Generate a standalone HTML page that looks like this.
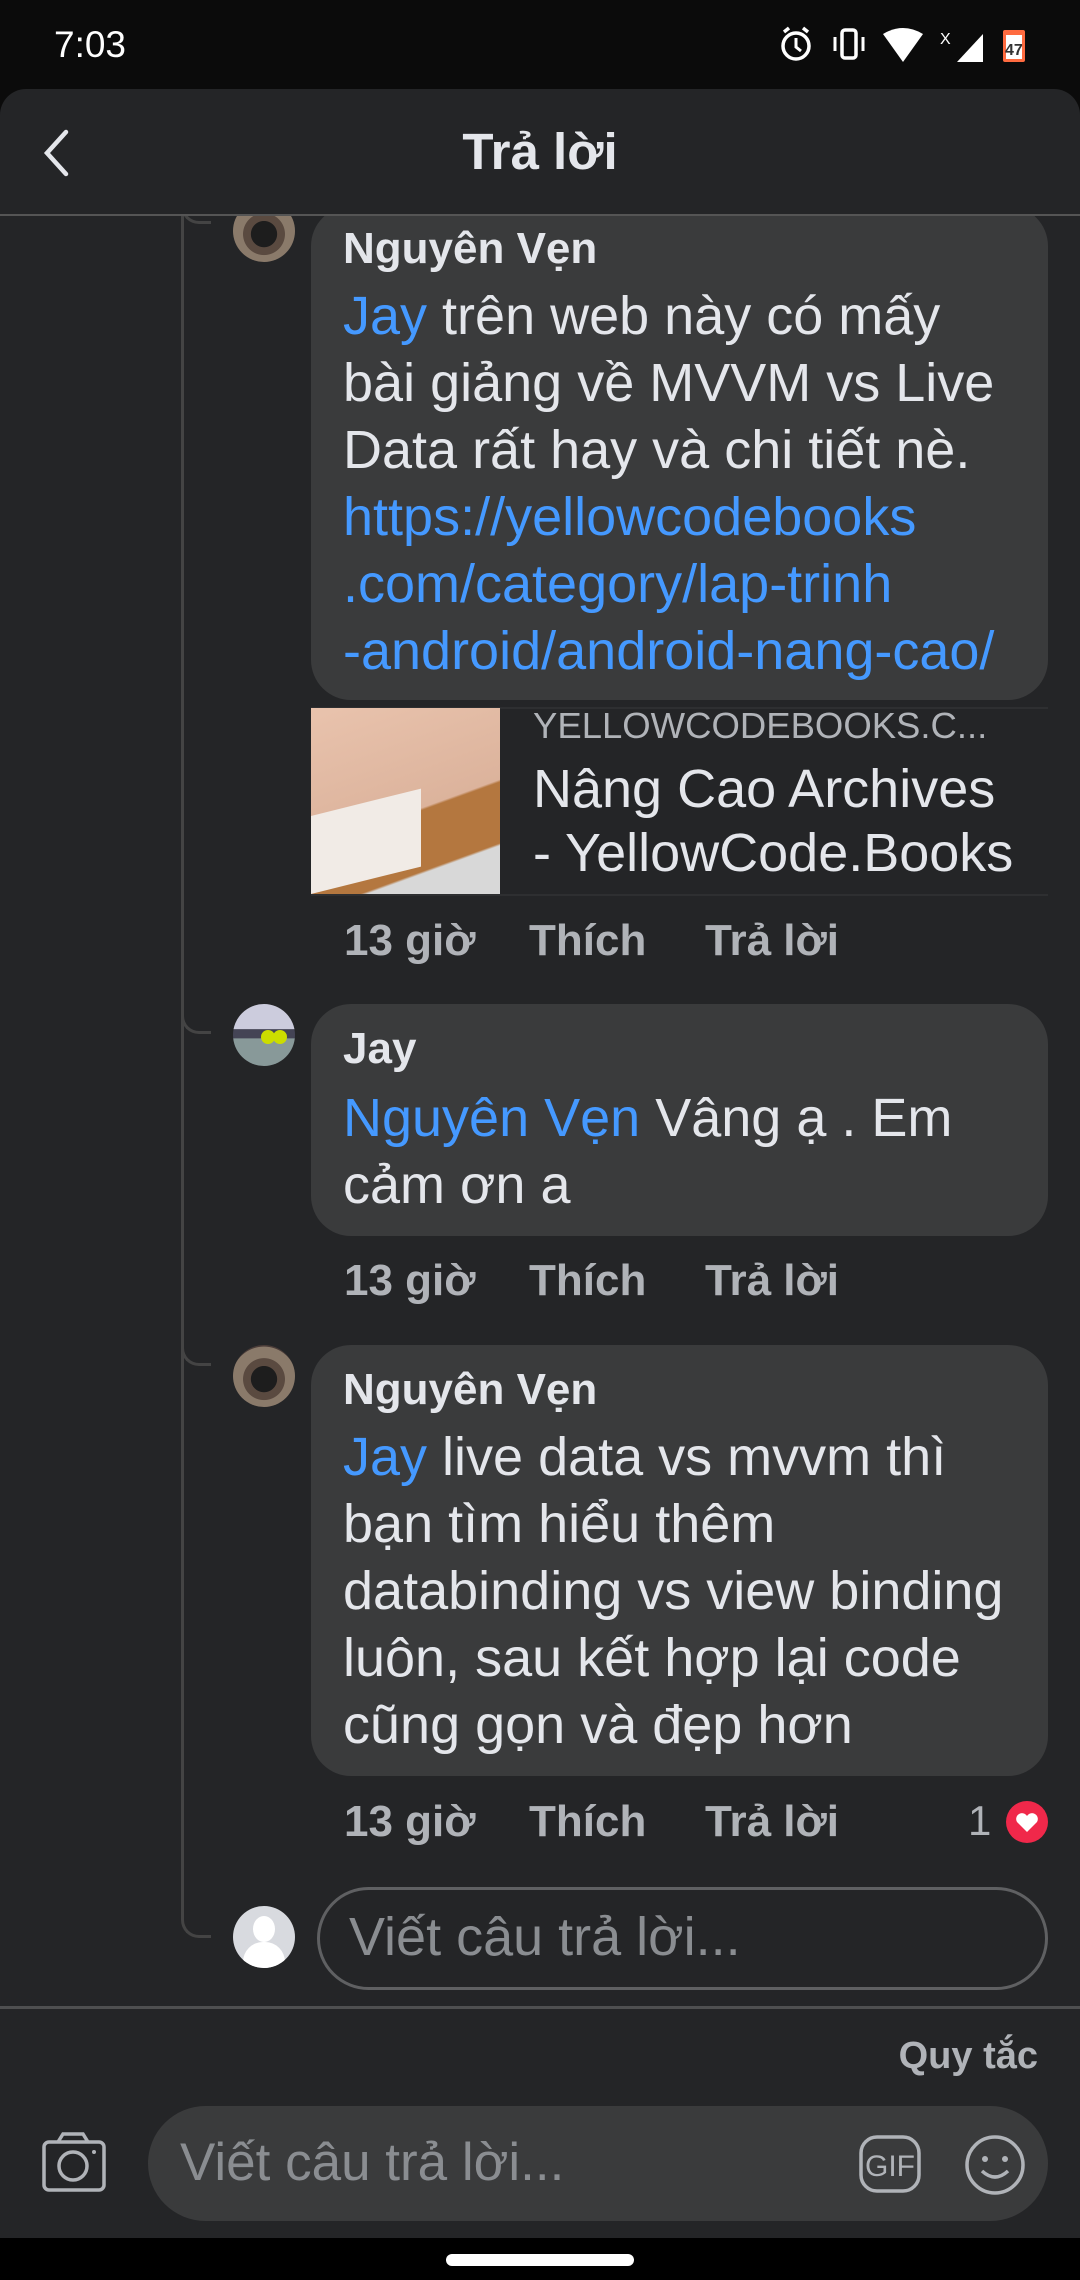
<!DOCTYPE html>
<html><head><meta charset="utf-8"><style>
*{margin:0;padding:0;box-sizing:border-box}
body{width:1080px;height:2280px;background:#0b0b0b;font-family:"Liberation Sans",sans-serif;position:relative;overflow:hidden;color:#e4e6eb}
.abs{position:absolute}
.main{position:absolute;left:0;top:89px;width:1080px;height:2149px;background:#242527;border-radius:26px 26px 0 0}
.t{position:absolute;white-space:nowrap}
.bub{position:absolute;background:#3a3b3c;border-radius:40px}
.name{font-weight:bold;font-size:44px;color:#e4e6eb}
.txt{font-size:54px;line-height:67px;color:#e4e6eb}
.blue{color:#4599ff}
.act{font-size:44px;font-weight:bold;color:#b0b3b8}
.av{position:absolute;width:62px;height:62px;border-radius:50%;overflow:hidden}
.ph{background:radial-gradient(circle at 50% 55%,#1d1d1d 0 28%,#5a4a40 29% 45%,#8a7a6a 46% 70%,#4a3c38 71%)}
</style></head><body>
<div class="t" style="left:54px;top:24px;font-size:37px;color:#fff">7:03</div>
<svg class="abs" style="left:770px;top:22px" width="260" height="44" viewBox="0 0 260 44">
<circle cx="26" cy="24" r="13" fill="none" stroke="#fff" stroke-width="3.5"/><path d="M26 16v9l5 4" stroke="#fff" stroke-width="3" fill="none"/><path d="M14 10l5-4M38 10l-5-4" stroke="#fff" stroke-width="3.5"/>
<rect x="72" y="8" width="14" height="28" rx="3" fill="none" stroke="#fff" stroke-width="3.5"/><path d="M65 15v14M93 15v14" stroke="#fff" stroke-width="3"/>
<path d="M113 12q20-12 40 0l-20 28z" fill="#fff"/>
<path d="M187 40l26-28v28z" fill="#fff"/><text x="170" y="22" fill="#fff" font-size="16" font-family="Liberation Sans">X</text>
<rect x="233" y="8" width="22" height="32" rx="2" fill="#ff6b40"/><rect x="236" y="13" width="16" height="24" fill="#fff"/><text x="235" y="33" fill="#333" font-size="16" font-weight="bold" font-family="Liberation Sans">47</text>
</svg>
<div class="main"></div>
<svg class="abs" style="left:38px;top:128px" width="34" height="50"><path d="M28 4L9 25l19 21" stroke="#e4e6eb" stroke-width="4.5" fill="none" stroke-linecap="round"/></svg>
<div class="t" style="left:0;width:1080px;text-align:center;top:122px;font-size:51px;font-weight:bold;color:#e4e6eb">Trả lời</div>
<div class="abs" style="left:0;top:214px;width:1080px;height:2px;background:#555"></div>
<div class="abs" style="left:0;top:216px;width:1080px;height:1790px;overflow:hidden">
 <div class="abs" style="left:181px;top:-10px;width:3px;height:1712px;background:#444"></div>
 <div class="abs" style="left:181px;top:-40px;width:30px;height:48px;border-left:3px solid #444;border-bottom:3px solid #444;border-radius:0 0 0 18px"></div>
 <div class="abs" style="left:181px;top:760px;width:30px;height:58px;border-left:3px solid #444;border-bottom:3px solid #444;border-radius:0 0 0 18px"></div>
 <div class="abs" style="left:181px;top:1100px;width:30px;height:50px;border-left:3px solid #444;border-bottom:3px solid #444;border-radius:0 0 0 18px"></div>
 <div class="abs" style="left:181px;top:1670px;width:30px;height:52px;border-left:3px solid #444;border-bottom:3px solid #444;border-radius:0 0 0 18px"></div>
 <!-- comment 1 -->
 <div class="av ph" style="left:233px;top:-16px"></div>
 <div class="bub" style="left:311px;top:-10px;width:737px;height:494px"></div>
 <div class="t name" style="left:343px;top:8px">Nguyên Vẹn</div>
 <div class="t txt" style="left:343px;top:67px"><span class="blue">Jay</span> trên web này có mấy<br>bài giảng về MVVM vs Live<br>Data rất hay và chi tiết nè.<br><span class="blue">https://yellowcodebooks<br>.com/category/lap-trinh<br>-android/android-nang-cao/</span></div>
 <div class="abs" style="left:311px;top:491px;width:737px;height:2px;background:#2e2f31"></div>
 <div class="abs" style="left:311px;top:678px;width:737px;height:2px;background:#2e2f31"></div>
 <div class="abs" style="left:311px;top:492px;width:189px;height:186px;background:linear-gradient(160deg,#e9c3ad 0%,#dcb39c 55%,#b4773f 56%,#b4773f 80%,#d8d8d8 81%)"></div>
 <div class="abs" style="left:311px;top:600px;width:110px;height:78px;background:#f1ebe6;transform:skewY(-14deg);transform-origin:0 100%"></div>
 <div class="t" style="left:533px;top:489px;font-size:36.5px;color:#b0b3b8">YELLOWCODEBOOKS.C...</div>
 <div class="t" style="left:533px;top:541px;font-size:54px;line-height:64px;color:#e4e6eb">Nâng Cao Archives<br>- YellowCode.Books</div>
 <div class="t act" style="left:344px;top:700px">13 giờ</div>
 <div class="t act" style="left:529px;top:700px">Thích</div>
 <div class="t act" style="left:705px;top:700px">Trả lời</div>
 <!-- comment 2 -->
 <div class="av" style="left:233px;top:788px;background:linear-gradient(#ccd 0 40%,#445 41% 55%,#899 56%)"><div class="abs" style="left:28px;top:26px;width:14px;height:14px;border-radius:50%;background:#cd0"></div><div class="abs" style="left:40px;top:26px;width:14px;height:14px;border-radius:50%;background:#cd0"></div></div>
 <div class="bub" style="left:311px;top:788px;width:737px;height:232px"></div>
 <div class="t name" style="left:343px;top:808px">Jay</div>
 <div class="t txt" style="left:343px;top:869px"><span class="blue">Nguyên Vẹn</span> Vâng ạ . Em<br>cảm ơn a</div>
 <div class="t act" style="left:344px;top:1040px">13 giờ</div>
 <div class="t act" style="left:529px;top:1040px">Thích</div>
 <div class="t act" style="left:705px;top:1040px">Trả lời</div>
 <!-- comment 3 -->
 <div class="av ph" style="left:233px;top:1129px"></div>
 <div class="bub" style="left:311px;top:1129px;width:737px;height:431px"></div>
 <div class="t name" style="left:343px;top:1149px">Nguyên Vẹn</div>
 <div class="t txt" style="left:343px;top:1208px"><span class="blue">Jay</span> live data vs mvvm thì<br>bạn tìm hiểu thêm<br>databinding vs view binding<br>luôn, sau kết hợp lại code<br>cũng gọn và đẹp hơn</div>
 <div class="t act" style="left:344px;top:1581px">13 giờ</div>
 <div class="t act" style="left:529px;top:1581px">Thích</div>
 <div class="t act" style="left:705px;top:1581px">Trả lời</div>
 <div class="t" style="left:968px;top:1581px;font-size:42px;color:#b0b3b8">1</div>
 <svg class="abs" style="left:1005px;top:1584px" width="44" height="44"><circle cx="22" cy="22" r="21" fill="#f0284a"/><path d="M22 32l-10-10a5.5 5.5 0 0 1 10-6a5.5 5.5 0 0 1 10 6z" fill="#fff"/></svg>
 <!-- reply input -->
 <div class="av" style="left:233px;top:1690px;background:#d8dadf"><div class="abs" style="left:20px;top:10px;width:22px;height:26px;border-radius:50%;background:#fff"></div><div class="abs" style="left:10px;top:36px;width:42px;height:30px;border-radius:20px 20px 0 0;background:#fff"></div></div>
 <div class="abs" style="left:317px;top:1671px;width:731px;height:103px;border:3px solid #5f6062;border-radius:52px"></div>
 <div class="t" style="left:349px;top:1690px;font-size:54px;color:#8a8d91">Viết câu trả lời...</div>
</div>
<div class="abs" style="left:0;top:2006px;width:1080px;height:3px;background:#4e4f50"></div>
<div class="t" style="right:42px;top:2035px;font-size:38px;font-weight:bold;color:#b0b3b8">Quy tắc</div>
<svg class="abs" style="left:40px;top:2130px" width="70" height="66"><rect x="4" y="12" width="60" height="48" rx="5" fill="none" stroke="#b0b3b8" stroke-width="3.5"/><path d="M18 12l5-8h20l5 8" fill="none" stroke="#b0b3b8" stroke-width="3.5"/><circle cx="33" cy="36" r="14" fill="none" stroke="#b0b3b8" stroke-width="3.5"/><circle cx="54" cy="22" r="2" fill="#b0b3b8"/></svg>
<div class="abs" style="left:148px;top:2106px;width:900px;height:115px;background:#3a3b3c;border-radius:58px"></div>
<div class="t" style="left:180px;top:2132px;font-size:53px;color:#8a8d91">Viết câu trả lời...</div>
<svg class="abs" style="left:858px;top:2134px" width="64" height="60"><rect x="3" y="3" width="58" height="54" rx="16" fill="none" stroke="#b0b3b8" stroke-width="3.5"/><text x="32" y="42" text-anchor="middle" fill="#b0b3b8" font-size="30" font-family="Liberation Sans">GIF</text></svg>
<svg class="abs" style="left:963px;top:2133px" width="64" height="64"><circle cx="32" cy="32" r="28" fill="none" stroke="#b0b3b8" stroke-width="3.5"/><circle cx="22" cy="26" r="3" fill="#b0b3b8"/><circle cx="42" cy="26" r="3" fill="#b0b3b8"/><path d="M19 38q13 12 26 0" fill="none" stroke="#b0b3b8" stroke-width="3.5"/></svg>
<div class="abs" style="left:0;top:2238px;width:1080px;height:42px;background:#000"></div>
<div class="abs" style="left:446px;top:2254px;width:188px;height:12px;border-radius:6px;background:#fff"></div>
</body></html>
